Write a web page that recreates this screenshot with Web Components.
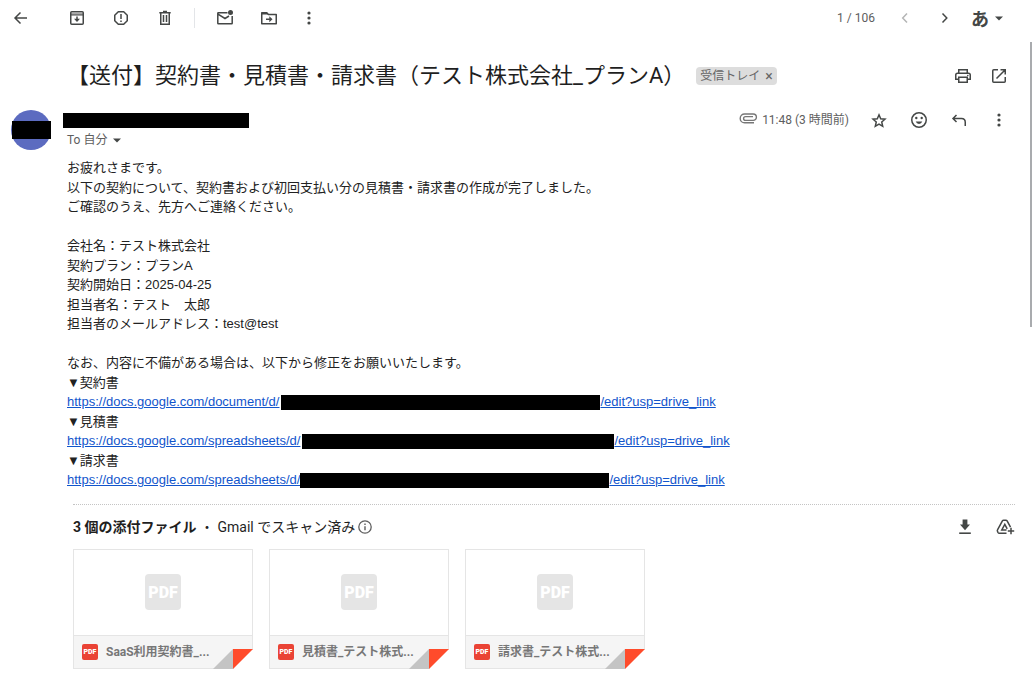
<!DOCTYPE html>
<html lang="ja">
<head>
<meta charset="utf-8">
<title>【送付】契約書・見積書・請求書</title>
<style>
  html, body {
    height: 100%;
    margin: 0;
    background: #fff;
  }
  body {
    font-family: Roboto, "Noto Sans CJK JP", sans-serif;
    color: #1f1f1f;
  }
</style>
</head>
<body>
<mail-view>
  <mail-toolbar slot="toolbar"></mail-toolbar>
  <mail-subject label="受信トレイ">【送付】契約書・見積書・請求書（テスト株式会社_プランA）</mail-subject>
  <mail-message to="To 自分" time="11:48 (3 時間前)">
    <mail-body></mail-body>
    <attachment-list>
      <attachment-card>SaaS利用契約書_...</attachment-card>
      <attachment-card>見積書_テスト株式...</attachment-card>
      <attachment-card>請求書_テスト株式...</attachment-card>
    </attachment-list>
  </mail-message>
</mail-view>

<script>
const icons = {
  back: '<path d="M16 10H4.5M9.5 4.5L4 10l5.500 5.500"/>',
  archive: '<path d="M4 5h12v2H4z" fill="#aaa" stroke="none"/><rect x="3.750" y="3.750" width="12.500" height="12.500" rx="1"/><path d="M4 7h12" stroke-width="1"/><path d="M10 8.500v3"/><path d="M7 10.800h6l-3 3.200z" fill="currentColor" stroke="none"/>',
  spam: '<path d="M7.300 3.750h5.400l3.550 3.550v5.400l-3.550 3.550H7.300L3.750 12.700V7.300z" stroke-linejoin="round"/><path d="M10 6v5M10 12.400v1.600"/>',
  trash: '<path d="M4.300 4.750h11.400M8 3.600h4M5.750 5v11.250h8.500V5"/><path d="M8.500 7v7M11.500 7v7"/>',
  unread: '<path d="M12.500 4.750H3.300q-.5 0-.5.5v10q0 .5.5.5h13.400q.5 0 .5-.5V8M3 6.200l7 4.300 4-2.500"/><circle cx="15.500" cy="4.500" r="2.500" fill="currentColor" stroke="none"/>',
  move: '<path d="M2.750 15.750V4.750h5l1.700 1.750h7.800v9.250z" stroke-linejoin="round"/><path d="M3 4.500h5l1.500 2H3z" fill="currentColor" stroke="none"/><path d="M7 11.250h4"/><path d="M10.300 8.300l3.200 2.950-3.200 2.950z" fill="currentColor" stroke="none"/>',
  more: '<g fill="currentColor" stroke="none"><circle cx="10" cy="5" r="1.600"/><circle cx="10" cy="10" r="1.600"/><circle cx="10" cy="15" r="1.600"/></g>',
  prev: '<path d="M12 5.500L7.700 10l4.300 4.500"/>',
  next: '<path d="M7.500 5.500l4.300 4.500-4.300 4.500"/>',
  caret: '<path d="M6 8.500h8l-4 4z" fill="currentColor" stroke="none"/>',
  print: '<path d="M5.750 7V3.750h8.500V7M5.500 13.250H2.750V9q0-1.750 1.750-1.750h11q1.750 0 1.750 1.750v4.250H14.500M5.750 11.250h8.500v5h-8.500z"/><circle cx="14.800" cy="9.500" r=".8" fill="currentColor" stroke="none"/>',
  open: '<path d="M9 3.750H4.750q-1 0-1 1v10.500q0 1 1 1h10.500q1 0 1-1V11M11.500 3.750h4.750V8.500M16 4l-8.500 8.500"/>',
  star: '<path d="M10 4.800l1.700 4 4.300.4-3.250 2.850.95 4.250L10 14.050 6.300 16.300l.95-4.250L4 9.200l4.300-.4z"/>',
  smile: '<circle cx="10" cy="10" r="7.250"/><g fill="currentColor" stroke="none"><circle cx="7.300" cy="8" r="1.200"/><circle cx="12.700" cy="8" r="1.200"/><path d="M6.700 11.500h6.600q-1 2.400-3.300 2.400t-3.300-2.400z"/></g>',
  reply: '<path d="M7.500 5L4 8.500 7.500 12M4 8.500h8.500q3.750 0 3.750 3.750V16"/>',
  clip: '<path d="M16 12.800H6.600a4.400 4.400 0 0 1 0-8.800h8.600a3.200 3.200 0 0 1 0 6.400H7.500a1.900 1.900 0 0 1 0-3.800H15" stroke-width="1.400"/>',
  info: '<circle cx="10" cy="10" r="6.200" stroke-width="1.300"/><path d="M10 9.200v4M10 6.500v1.400" stroke-width="1.400"/>',
  download: '<path d="M7.600 2.500h4.800v5H15l-5 5.800-5-5.800h2.600z" fill="currentColor" stroke="none"/><path d="M4.200 16.200h11.600" stroke-width="1.600"/>',
  drive: '<path d="M11.500 16.250H4.300q-.8 0-1.200-.7l-.6-1.200q-.4-.7 0-1.400l4.900-9.100q.4-.7 1.200-.7h2.300q.8 0 1.200.7l3.400 6.200"/><path d="M11.500 12.900H6.800L9.800 7.400l2.400 4.500"/><path d="M16 10.800v6.400M12.800 14h6.400"/>'
};

function attach(el, html) {
  el.attachShadow({ mode: 'open' }).innerHTML = html;
}

class UiIcon extends HTMLElement {
  connectedCallback() {
    attach(this, `
      <style>
        :host { display: block; width: 20px; height: 20px; flex: none; }
        svg { display: block; width: 100%; height: 100%; overflow: visible; }
      </style>
      <svg viewBox="0 0 20 20" fill="none" stroke="currentColor" stroke-width="1.5" aria-hidden="true">${icons[this.getAttribute('name')]}</svg>
    `);
  }
}
customElements.define('ui-icon', UiIcon);

class IconButton extends HTMLElement {
  connectedCallback() {
    attach(this, `
      <style>
        :host { display: block; flex: none; color: #444746; }
        :host([dim]) { color: #b4b5b5; }
        button { display: block; margin: 0; padding: 0; border: 0; background: none; color: inherit; cursor: pointer; }
      </style>
      <button type="button" aria-label="${this.getAttribute('label')}"><ui-icon name="${this.getAttribute('name')}"></ui-icon></button>
    `);
  }
}
customElements.define('icon-button', IconButton);

// Black bar over private data
class RedactedBar extends HTMLElement {
  connectedCallback() {
    attach(this, `
      <style>
        :host { display: inline-block; height: 15px; background: #000; vertical-align: middle; }
      </style>
    `);
  }
}
customElements.define('redacted-bar', RedactedBar);

class MailView extends HTMLElement {
  connectedCallback() {
    attach(this, `
      <style>
        :host { display: flex; flex-direction: column; min-height: 100%; }
        .content { display: flex; flex: 1; }
        main { flex: 1; min-width: 0; padding: 20px 15px 0 0; }
        .track { width: 2px; padding-top: 6px; }
        .thumb { height: 285px; background: #a9abae; }
      </style>
      <slot name="toolbar"></slot>
      <div class="content">
        <main><slot></slot></main>
        <div class="track"><div class="thumb"></div></div>
      </div>
    `);
  }
}
customElements.define('mail-view', MailView);

class MailToolbar extends HTMLElement {
  connectedCallback() {
    attach(this, `
      <style>
        :host { display: block; }
        header { display: flex; align-items: center; height: 36px; padding: 0 23px 0 11px; }
        .group { display: flex; align-items: center; gap: 24px; }
        .actions { margin-left: 36px; }
        .divider { width: 1px; height: 20px; margin: 0 20px 0 19px; background: #e3e5e8; }
        .last { margin-left: 20px; }
        .count { margin-left: auto; margin-right: 20px; font-size: 12px; line-height: 16px; color: #5e5e5e; }
        .pager { gap: 20px; }
        .input-tool { display: flex; align-items: center; margin: 0 0 0 16px; padding: 0; border: 0; background: none; color: #444746; font: 700 18px/20px "Noto Sans CJK JP", sans-serif; cursor: pointer; }
      </style>
      <header>
        <icon-button name="back" label="受信トレイに戻る"></icon-button>
        <div class="group actions">
          <icon-button name="archive" label="アーカイブ"></icon-button>
          <icon-button name="spam" label="迷惑メールを報告"></icon-button>
          <icon-button name="trash" label="削除"></icon-button>
        </div>
        <div class="divider"></div>
        <div class="group">
          <icon-button name="unread" label="未読にする"></icon-button>
          <icon-button name="move" label="移動"></icon-button>
        </div>
        <icon-button class="last" name="more" label="その他"></icon-button>
        <span class="count">1 / 106</span>
        <div class="group pager">
          <icon-button name="prev" label="新しい" dim></icon-button>
          <icon-button name="next" label="古い"></icon-button>
        </div>
        <button class="input-tool" type="button">あ<ui-icon name="caret"></ui-icon></button>
      </header>
    `);
  }
}
customElements.define('mail-toolbar', MailToolbar);

class MailSubject extends HTMLElement {
  connectedCallback() {
    attach(this, `
      <style>
        :host { display: flex; align-items: center; min-height: 40px; padding: 0 6px 0 67px; }
        h1 { margin: 0; font-size: 22px; font-weight: 400; line-height: 28px; }
        .chip { display: flex; align-items: center; height: 18px; margin-left: 11px; padding: 0 4px; border-radius: 4px; background: #ddd; color: #666; font-size: 12px; line-height: 18px; white-space: nowrap; }
        .chip button { margin: 0 0 0 5px; padding: 0; border: 0; background: none; color: inherit; font: 14px/18px Roboto, sans-serif; }
        .tools { display: flex; gap: 16px; margin-left: auto; }
      </style>
      <h1><slot></slot></h1>
      <span class="chip">${this.getAttribute('label')}<button type="button" aria-label="ラベルを削除">×</button></span>
      <div class="tools">
        <icon-button name="print" label="印刷"></icon-button>
        <icon-button name="open" label="新しいウィンドウ"></icon-button>
      </div>
    `);
  }
}
customElements.define('mail-subject', MailSubject);

class MailMessage extends HTMLElement {
  connectedCallback() {
    attach(this, `
      <style>
        :host { display: flex; gap: 12px; padding: 14px 0 0 11px; }
        .avatar { display: flex; align-items: center; flex: none; width: 40px; height: 40px; border-radius: 50%; background: #5c6bc0; }
        .avatar redacted-bar { width: 39px; height: 18px; margin-left: 1px; flex: none; }
        .content { flex: 1; min-width: 0; }
        .head { display: flex; align-items: flex-start; justify-content: space-between; padding-right: 6px; }
        .sender { padding-top: 3px; }
        .sender redacted-bar { display: block; width: 186px; }
        .to { display: flex; align-items: center; margin: 4px 0 0 4px; padding: 0; border: 0; background: none; color: #5e5e5e; font: inherit; font-size: 12px; line-height: 16px; }
        .to ui-icon { margin: -2px 0; color: #444746; }
        .meta { display: flex; align-items: center; gap: 20px; }
        .date { display: flex; align-items: center; gap: 4px; color: #5e5e5e; font-size: 12px; line-height: 20px; }
        .date ui-icon { color: #777; }
      </style>
      <div class="avatar"><redacted-bar></redacted-bar></div>
      <div class="content">
        <div class="head">
          <div class="sender">
            <redacted-bar></redacted-bar>
            <button class="to" type="button">${this.getAttribute('to')}<ui-icon name="caret"></ui-icon></button>
          </div>
          <div class="meta">
            <span class="date"><ui-icon name="clip"></ui-icon>${this.getAttribute('time')}</span>
            <icon-button name="star" label="スター"></icon-button>
            <icon-button name="smile" label="リアクション"></icon-button>
            <icon-button name="reply" label="返信"></icon-button>
            <icon-button name="more" label="その他"></icon-button>
          </div>
        </div>
        <slot></slot>
      </div>
    `);
  }
}
customElements.define('mail-message', MailMessage);

class MailBody extends HTMLElement {
  connectedCallback() {
    attach(this, `
      <style>
        :host { display: block; margin-top: 10px; padding-left: 4px; color: #222; font: 13px/1.5 "Liberation Sans", "Noto Sans CJK JP", sans-serif; }
        a { color: #1155cc; }
        .doc { width: 319px; margin-left: 2px; }
        .estimate { width: 312px; margin-left: 2px; }
        .invoice { width: 309px; }
      </style>
      <div>お疲れさまです。</div>
      <div>以下の契約について、契約書および初回支払い分の見積書・請求書の作成が完了しました。</div>
      <div>ご確認のうえ、先方へご連絡ください。</div>
      <br>
      <div>会社名：テスト株式会社</div>
      <div>契約プラン：プランA</div>
      <div>契約開始日：2025-04-25</div>
      <div>担当者名：テスト　太郎</div>
      <div>担当者のメールアドレス：test@test</div>
      <br>
      <div>なお、内容に不備がある場合は、以下から修正をお願いいたします。</div>
      <div>▼契約書</div>
      <div><a href="#">https://docs.google.com/document/d/<redacted-bar class="doc"></redacted-bar>/edit?usp=drive_link</a></div>
      <div>▼見積書</div>
      <div><a href="#">https://docs.google.com/spreadsheets/d/<redacted-bar class="estimate"></redacted-bar>/edit?usp=drive_link</a></div>
      <div>▼請求書</div>
      <div><a href="#">https://docs.google.com/spreadsheets/d/<redacted-bar class="invoice"></redacted-bar>/edit?usp=drive_link</a></div>
    `);
  }
}
customElements.define('mail-body', MailBody);

class AttachmentList extends HTMLElement {
  connectedCallback() {
    attach(this, `
      <style>
        :host { display: block; margin: 14px 0 0 10px; padding-top: 11px; border-top: 1px dotted #c4c4c4; }
        .head { display: flex; align-items: center; height: 22px; font-size: 14px; line-height: 22px; }
        h2 { margin: 0; font-size: 14px; font-weight: 700; }
        .info { color: #5e5e5e; }
        .tools { display: flex; gap: 20px; margin-left: auto; }
        .cards { display: flex; flex-wrap: wrap; gap: 16px; margin-top: 11px; }
      </style>
      <div class="head">
        <h2>3 個の添付ファイル</h2>
        <span>&nbsp;・&nbsp;Gmail でスキャン済み</span>
        <ui-icon class="info" name="info"></ui-icon>
        <div class="tools">
          <icon-button name="download" label="すべてダウンロード"></icon-button>
          <icon-button name="drive" label="ドライブに追加"></icon-button>
        </div>
      </div>
      <div class="cards"><slot></slot></div>
    `);
  }
}
customElements.define('attachment-list', AttachmentList);

class AttachmentCard extends HTMLElement {
  connectedCallback() {
    attach(this, `
      <style>
        :host { display: flex; flex-direction: column; position: relative; box-sizing: border-box; width: 180px; height: 120px; border: 1px solid #e5e5e5; }
        .preview { display: flex; flex: 1; align-items: center; justify-content: center; }
        .pdf { display: flex; align-items: center; justify-content: center; flex: none; color: #fff; font-weight: 900; }
        .large { width: 36px; height: 36px; border-radius: 4px; background: #e5e5e5; font-size: 16px; }
        .small { width: 16px; height: 16px; border-radius: 2px; background: #ea4335; font-size: 7px; }
        .name { display: flex; align-items: center; gap: 8px; height: 32px; padding-left: 8px; border-top: 1px solid #e5e5e5; background: #f5f5f5; color: #777; font-size: 12px; font-weight: 700; line-height: 16px; white-space: nowrap; }
        .fold { position: absolute; right: -1px; bottom: -1px; width: 40px; height: 20px; }
      </style>
      <div class="preview"><span class="pdf large">PDF</span></div>
      <div class="name"><span class="pdf small">PDF</span><span><slot></slot></span></div>
      <svg class="fold" viewBox="0 0 40 20" aria-hidden="true">
        <path d="M40 0v20H20z" fill="#fff"/>
        <path d="M20 0v20H0z" fill="#c4c4c4"/>
        <path d="M20 0h20L20 20z" fill="#ff4b2b"/>
      </svg>
    `);
  }
}
customElements.define('attachment-card', AttachmentCard);
</script>
</body>
</html>
